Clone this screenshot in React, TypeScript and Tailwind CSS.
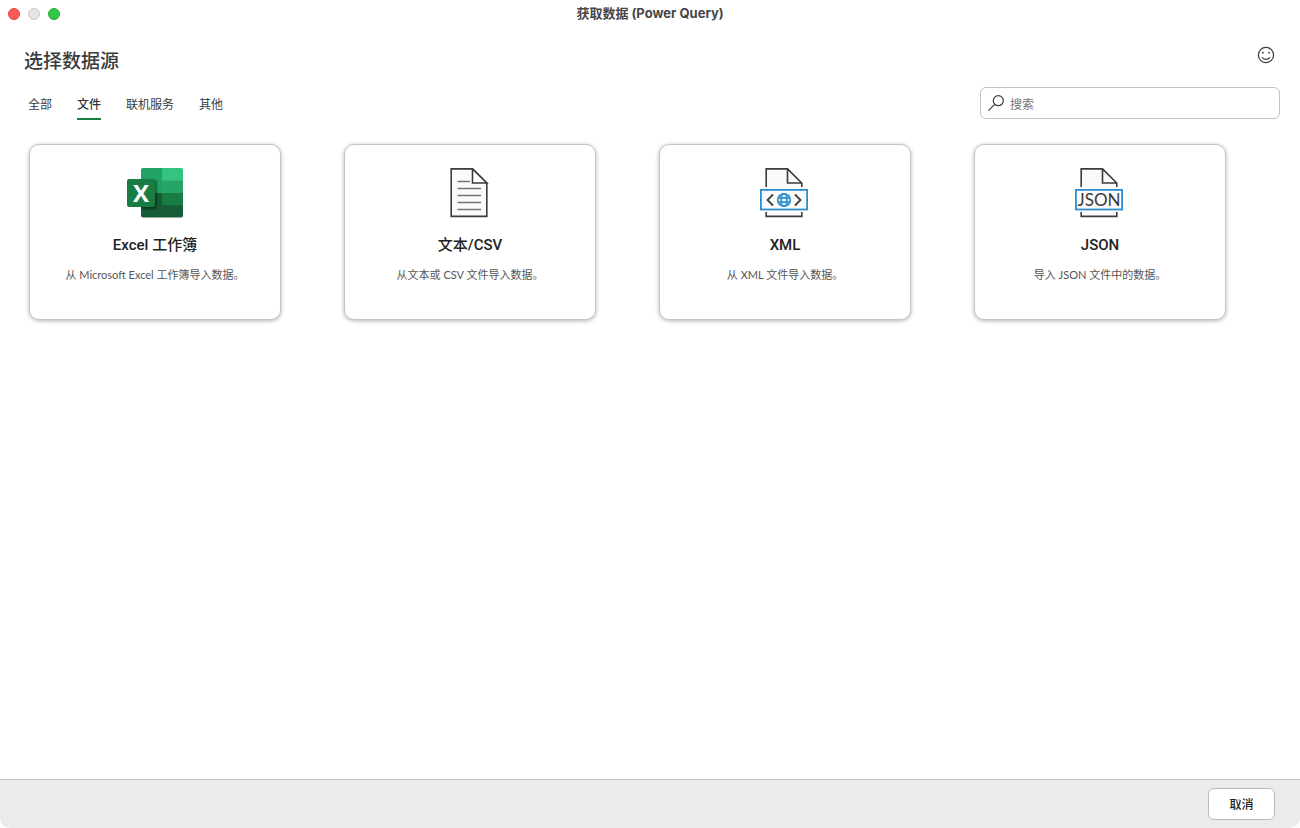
import { useState } from "react";
import type { ReactNode } from "react";

function ExcelIcon() {
  return (
    <svg width="56" height="50" viewBox="0 0 56 50" aria-hidden="true">
      <defs>
        <clipPath id="sheet">
          <rect x="14" y="0" width="42" height="49.5" rx="2" />
        </clipPath>
        <filter id="soft" x="-30%" y="-30%" width="160%" height="160%">
          <feGaussianBlur stdDeviation="1.2" />
        </filter>
      </defs>
      <g clipPath="url(#sheet)">
        <rect x="14" y="0" width="21" height="13" fill="#21a366" />
        <rect x="35" y="0" width="21" height="13" fill="#33c481" />
        <rect x="14" y="12.5" width="21" height="13" fill="#21a366" />
        <rect x="35" y="12.5" width="21" height="13" fill="#27a567" />
        <rect x="14" y="25" width="42" height="25" fill="#185c37" />
        <rect x="35" y="25" width="21" height="12.3" fill="#187c43" />
        <rect x="10" y="12" width="20" height="29" rx="2" fill="#000" opacity="0.4" filter="url(#soft)" />
      </g>
      <rect x="0" y="11" width="28" height="28" rx="2" fill="#187c43" />
      <text x="14" y="33.5" textAnchor="middle" className="fill-white font-['Open_Sans',sans-serif] text-[24px] font-bold">
        X
      </text>
    </svg>
  );
}

function TextIcon() {
  return (
    <svg width="50" height="50" viewBox="0 0 50 50" fill="none" aria-hidden="true">
      <path d="M6.2 .9H27.5L41.8 15V48.4H6.2Z" fill="#fafafa" stroke="#3b3b3b" strokeWidth="1.6" />
      <path d="M27.5 .9V15H41.8Z" fill="#fff" stroke="#3b3b3b" strokeWidth="1.6" />
      <path d="M12.5 13.5H25M12.5 20.5H36M12.5 27.5H36M12.5 34.5H36M12.5 41.5H36" stroke="#757575" strokeWidth="1.5" />
    </svg>
  );
}

function LabelledPage({ children }: { children: ReactNode }) {
  return (
    <svg width="50" height="50" viewBox="0 0 50 50" fill="none" aria-hidden="true">
      <path d="M6.2 19V.9H27.5L41.8 15V19Z" fill="#fafafa" />
      <path d="M6.2 19V.9H27.5L41.8 15V19M27.5 .9V15H41.8M6.2 44V48.4H41.8V44" stroke="#3b3b3b" strokeWidth="1.6" />
      <rect x=".9" y="21.9" width="46.2" height="19.6" fill="#fafafa" stroke="#2b8fd0" strokeWidth="1.8" />
      {children}
    </svg>
  );
}

function XmlIcon() {
  return (
    <LabelledPage>
      <path d="M13 26.5L7.5 32L13 37.5M35 26.5L40.5 32L35 37.5" stroke="#3b3b3b" strokeWidth="1.8" />
      <g stroke="#2b8fd0" strokeWidth="1.7">
        <circle cx="24" cy="32" r="6.2" />
        <ellipse cx="24" cy="32" rx="2.9" ry="6.2" />
        <path d="M18.4 29.8H29.6M18.4 34.2H29.6" />
      </g>
    </LabelledPage>
  );
}

function JsonIcon() {
  return (
    <LabelledPage>
      <text x="24" y="37.5" textAnchor="middle" className="fill-[#3b3b3b] font-['Lato',sans-serif] text-[17px]">
        JSON
      </text>
    </LabelledPage>
  );
}

const tabs = ["全部", "文件", "联机服务", "其他"];

const sources = [
  { title: "Excel 工作簿", text: "从 Microsoft Excel 工作簿导入数据。", icon: <ExcelIcon /> },
  { title: "文本/CSV", text: "从文本或 CSV 文件导入数据。", icon: <TextIcon /> },
  { title: "XML", text: "从 XML 文件导入数据。", icon: <XmlIcon /> },
  { title: "JSON", text: "导入 JSON 文件中的数据。", icon: <JsonIcon /> },
];

export default function App() {
  const [active, setActive] = useState("文件");

  return (
    <div className="flex min-h-screen flex-col bg-white font-['Open_Sans','Noto_Sans_CJK_SC',sans-serif] text-[#3b3b3b]">
      <header className="grid h-7 grid-cols-[1fr_auto_1fr] items-center px-2">
        <div className="flex gap-2">
          <button aria-label="关闭" className="size-3 rounded-full border border-[#e2463f] bg-[#fc5b57]" />
          <button aria-label="最小化" className="size-3 rounded-full border border-[#c6c6c6] bg-[#e5e5e5]" />
          <button aria-label="缩放" className="size-3 rounded-full border border-[#24ab2f] bg-[#33c748]" />
        </div>
        <h1 className="pb-0.5 font-[Inter,'Noto_Sans_CJK_SC',sans-serif] text-[13px] leading-5 font-bold text-[#464646]">
          获取数据 (Power Query)
        </h1>
      </header>

      <main className="flex-1">
        <div className="flex items-start justify-between px-6 pt-4">
          <h2 className="pt-px text-[19px] leading-8 font-medium">选择数据源</h2>
          <button aria-label="反馈" className="-mr-px p-0.5">
            <svg width="18" height="18" viewBox="0 0 18 18" fill="none" stroke="#3b3b3b" strokeWidth="1.2" aria-hidden="true">
              <circle cx="9" cy="9" r="7.6" />
              <path d="M5 11.2C6.6 14 11.4 14 13 11.2" />
              <path d="M5.2 6.8H6.8M11.2 6.8H12.8" strokeWidth="1.6" />
            </svg>
          </button>
        </div>

        <div className="flex items-start justify-between pt-2.5 pr-5 pl-7">
          <nav className="flex gap-[25px] pt-2">
            {tabs.map((tab) => (
              <button
                key={tab}
                onClick={() => setActive(tab)}
                className={
                  tab === active
                    ? "border-b-2 border-[#187c43] pb-[3px] text-xs leading-5 font-medium text-[#333]"
                    : "border-b-2 border-transparent pb-[3px] text-xs leading-5"
                }
              >
                {tab}
              </button>
            ))}
          </nav>
          <label className="flex h-8 w-[300px] items-center gap-1.5 rounded-md border border-[#c2c2c2] px-[7px]">
            <svg width="16" height="16" viewBox="0 0 16 16" fill="none" stroke="#3b3b3b" strokeWidth="1.2" aria-hidden="true">
              <circle cx="10.3" cy="5.7" r="5" />
              <path d="M6.7 9.3L.4 15.6" />
            </svg>
            <input
              type="search"
              aria-label="搜索"
              placeholder="搜索"
              className="min-w-0 flex-1 pt-[3px] text-xs leading-5 outline-none placeholder:text-[#757575]"
            />
          </label>
        </div>

        <div className="grid grid-cols-[repeat(auto-fill,252px)] gap-[63px] pt-6 pr-5 pl-[29px]">
          {sources.map((source) => (
            <button
              key={source.title}
              className="flex h-44 flex-col items-center rounded-[10px] border border-[#c6c6c6] bg-white pt-[23px] shadow-[0_1px_4px_rgba(0,0,0,0.3)]"
            >
              {source.icon}
              <span className="mt-[17px] font-[Roboto,'Noto_Sans_CJK_SC',sans-serif] text-[15px] leading-5 font-medium text-[#222]">
                {source.title}
              </span>
              <span className="mt-2.5 font-[Lato,'Noto_Sans_CJK_SC',sans-serif] text-[11px] leading-5 text-[#555]">
                {source.text}
              </span>
            </button>
          ))}
        </div>
      </main>

      <footer className="flex justify-end rounded-b-[10px] border-t border-[#c4c4c4] bg-[#ebebeb] py-2 pr-[25px]">
        <button className="h-8 min-w-[67px] rounded-md border border-[#b9b9b9] bg-white px-4 pt-0.5 text-xs font-medium text-[#222]">
          取消
        </button>
      </footer>
    </div>
  );
}
